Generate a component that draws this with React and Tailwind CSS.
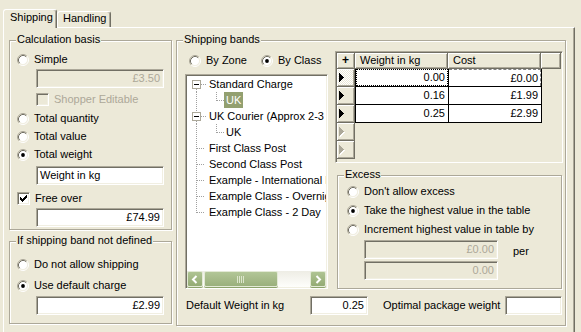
import React from "react";

const SUNKEN =
  "border border-t-[#ACA899] border-l-[#ACA899] border-b-white border-r-white shadow-[inset_1px_1px_0_#716F64,inset_-1px_-1px_0_#F1EFE2]";
const RAISED =
  "bg-[#ECE9D8] border-r border-b border-r-[#716F64] border-b-[#716F64] shadow-[inset_1px_1px_0_#fff,inset_-1px_-1px_0_#ACA899]";

function Radio({ checked }) {
  return (
    <svg width="12" height="12" viewBox="0 0 12 12" className="shrink-0">
      <circle cx="6" cy="6" r="4.5" fill="#fff" />
      <path d="M2.11 9.89A5.5 5.5 0 0 1 9.89 2.11" fill="none" stroke="#ACA899" />
      <path d="M9.89 2.11A5.5 5.5 0 0 1 2.11 9.89" fill="none" stroke="#fff" />
      <path d="M2.82 9.18A4.5 4.5 0 0 1 9.18 2.82" fill="none" stroke="#716F64" />
      <path d="M9.18 2.82A4.5 4.5 0 0 1 2.82 9.18" fill="none" stroke="#F1EFE2" />
      {checked && <circle cx="6" cy="6" r="1.9" fill="#000" />}
    </svg>
  );
}

function RadioRow({ checked, label, className = "" }) {
  return (
    <div className={`flex items-center h-[17px] ${className}`}>
      <Radio checked={checked} />
      <span className="ml-[5px] whitespace-nowrap">{label}</span>
    </div>
  );
}

function Check({ checked, disabled }) {
  return (
    <div
      className={`w-[13px] h-[13px] shrink-0 flex items-center justify-center ${SUNKEN} ${
        disabled ? "bg-[#ECE9D8]" : "bg-white"
      }`}
    >
      {checked && (
        <svg width="7" height="7" viewBox="0 0 7 7" shapeRendering="crispEdges">
          <path
            d="M6 0h1v1h-1z M5 1h2v1h-2z M0 2h1v1h-1z M4 2h3v1h-3z M0 3h2v1h-2z M3 3h3v1h-3z M0 4h5v1h-5z M1 5h3v1h-3z M2 6h1v1h-1z"
            fill="#000"
          />
        </svg>
      )}
    </div>
  );
}

function Input({ value, disabled, left, className = "" }) {
  return (
    <div
      className={`h-[19px] flex items-center px-[3px] whitespace-nowrap overflow-hidden ${SUNKEN} ${
        disabled ? "bg-[#ECE9D8] text-[#ACA899]" : "bg-white"
      } ${left ? "justify-start" : "justify-end"} ${className}`}
    >
      {value}
    </div>
  );
}

function Group({ label, className = "", children }) {
  return (
    <div
      className={`relative border border-[#ACA899] shadow-[inset_1px_1px_0_#fff,1px_1px_0_#fff] ${className}`}
    >
      <span className="absolute -top-[8px] left-[6px] px-px bg-[#ECE9D8] leading-[13px] whitespace-nowrap">
        {label}
      </span>
      {children}
    </div>
  );
}

const DOT = { stroke: "#A0A0A0", strokeDasharray: "1 1", fill: "none" };

function MinusBox() {
  return (
    <>
      <rect x="5.5" y="4.5" width="8" height="8" fill="#fff" stroke="#ACA899" />
      <rect x="7" y="8" width="5" height="1" fill="#000" />
    </>
  );
}

function TreeRow({ kind, label, selected }) {
  // kinds: first, parent, child, leaf, last
  if (kind === "child") {
    return (
      <div className="flex items-center h-[16px] whitespace-nowrap">
        <svg width="37" height="16" className="shrink-0">
          <line x1="9.5" y1="0" x2="9.5" y2="16" {...DOT} />
          <line x1="29.5" y1="0" x2="29.5" y2="9" {...DOT} />
          <line x1="30" y1="8.5" x2="37" y2="8.5" {...DOT} />
        </svg>
        <span
          className={`h-[16px] leading-[16px] px-[2px] ${
            selected ? "bg-[#93A070] text-white" : ""
          }`}
        >
          {label}
        </span>
      </div>
    );
  }
  return (
    <div className="flex items-center h-[16px] whitespace-nowrap">
      <svg width="21" height="16" className="shrink-0">
        {kind === "first" && <line x1="9.5" y1="13" x2="9.5" y2="16" {...DOT} />}
        {kind === "parent" && (
          <>
            <line x1="9.5" y1="0" x2="9.5" y2="4" {...DOT} />
            <line x1="9.5" y1="13" x2="9.5" y2="16" {...DOT} />
          </>
        )}
        {kind === "leaf" && <line x1="9.5" y1="0" x2="9.5" y2="16" {...DOT} />}
        {kind === "last" && <line x1="9.5" y1="0" x2="9.5" y2="9" {...DOT} />}
        {(kind === "first" || kind === "parent") && (
          <>
            <line x1="14" y1="8.5" x2="20" y2="8.5" {...DOT} />
            <MinusBox />
          </>
        )}
        {(kind === "leaf" || kind === "last") && (
          <line x1="10" y1="8.5" x2="18" y2="8.5" {...DOT} />
        )}
      </svg>
      <span className="ml-px">{label}</span>
    </div>
  );
}

function ScrollBtn({ dir }) {
  return (
    <div className="w-[16px] h-[16px] shrink-0 rounded-[2px] border border-[#E3EAD6] bg-gradient-to-b from-[#AFC493] to-[#94AB74] shadow-[0_1px_0_#8DA36C] flex items-center justify-center">
      <svg width="8" height="9" viewBox="0 0 8 9">
        {dir === "left" ? (
          <polyline points="5.5,1 2,4.5 5.5,8" fill="none" stroke="#fff" strokeWidth="2" />
        ) : (
          <polyline points="2.5,1 6,4.5 2.5,8" fill="none" stroke="#fff" strokeWidth="2" />
        )}
      </svg>
    </div>
  );
}

function Scrollbar() {
  return (
    <div className="h-[16px] shrink-0 flex bg-gradient-to-b from-[#EEEDE5] to-[#FEFEFB]">
      <ScrollBtn dir="left" />
      <div className="ml-px w-[74px] h-[16px] rounded-[2px] border border-[#E3EAD6] bg-gradient-to-b from-[#B2C697] to-[#9AB07C] shadow-[0_1px_0_#8DA36C] flex items-center justify-center">
        <svg width="8" height="7" viewBox="0 0 8 7" shapeRendering="crispEdges">
          <rect x="0" y="0" width="1" height="7" fill="#DDE6CD" />
          <rect x="2" y="0" width="1" height="7" fill="#DDE6CD" />
          <rect x="4" y="0" width="1" height="7" fill="#DDE6CD" />
          <rect x="6" y="0" width="1" height="7" fill="#DDE6CD" />
        </svg>
      </div>
      <div className="flex-1" />
      <ScrollBtn dir="right" />
    </div>
  );
}

function Tri({ disabled }) {
  return (
    <svg width="7" height="10" viewBox="0 0 7 10" shapeRendering="crispEdges">
      {disabled && <polygon points="1,1 6,5.5 1,10" fill="#fff" />}
      <polygon points="0,0 5,4.5 0,9" fill={disabled ? "#ACA899" : "#000"} />
    </svg>
  );
}

function Grid() {
  const rows = [
    ["0.00", "£0.00"],
    ["0.16", "£1.99"],
    ["0.25", "£2.99"],
    null,
    null,
  ];
  return (
    <div className={`h-[112px] pl-px pt-px flex flex-col border border-t-[#ACA899] border-l-[#ACA899] border-b-white border-r-white shadow-[inset_1px_1px_0_#716F64]`}>
      <div className="flex h-[16px] shrink-0">
        <div className={`w-[18px] ${RAISED} flex items-center justify-center font-bold text-[12px]`}>+</div>
        <div className={`w-[93px] ${RAISED} flex items-center pl-[5px]`}>Weight in kg</div>
        <div className={`w-[93px] ${RAISED} flex items-center pl-[5px]`}>Cost</div>
        <div className={`w-[20px] ${RAISED}`} />
      </div>
      {rows.map((r, i) => (
        <div key={i} className="flex h-[18px] shrink-0">
          <div
            className={`w-[18px] ${RAISED} flex items-center pl-[2px] ${
              i === 0
                ? "bg-[image:repeating-conic-gradient(#ffffff_0%_25%,#ECE9D8_0%_50%)] bg-[length:2px_2px]"
                : ""
            }`}
          >
            <Tri disabled={!r} />
          </div>
          {r && i === 0 && (
            <>
              <div className="w-[94px] bg-white border-l border-r border-b border-black flex">
                <div className="flex-1 border border-dotted border-black flex items-center justify-end pr-[2px]">
                  {r[0]}
                </div>
              </div>
              <div className="w-[93px] bg-white border-r border-b border-black flex">
                <div className="flex-1 border-t border-r border-dashed border-[#808080] flex items-center justify-end pr-[2px]">
                  {r[1]}
                </div>
              </div>
            </>
          )}
          {r && i > 0 && (
            <>
              <div className="w-[94px] bg-white border-l border-r border-b border-black flex items-center justify-end pr-[3px]">
                {r[0]}
              </div>
              <div className="w-[93px] bg-white border-r border-b border-black flex items-center justify-end pr-[3px]">
                {r[1]}
              </div>
            </>
          )}
        </div>
      ))}
    </div>
  );
}

export default function App() {
  return (
    <div className="w-[581px] h-[332px] overflow-hidden bg-[#ECE9D8] text-black text-[11px] leading-[13px] font-['Liberation_Sans',Arial,sans-serif]">
      {/* Tabs */}
      <div className="h-[27px] flex items-end pl-[3px]">
        <div className="relative z-10 -mb-px h-[19px] w-[54px] bg-[#ECE9D8] border-l border-t border-white border-r border-r-[#716F64] rounded-t-[3px] shadow-[inset_-1px_0_0_#ACA899] pl-[6px] pt-px">
          Shipping
        </div>
        <div className="h-[16px] w-[54px] bg-[#ECE9D8] border-l border-t border-white border-r border-r-[#716F64] rounded-t-[3px] shadow-[inset_-1px_0_0_#ACA899] pl-[5px]">
          Handling
        </div>
      </div>

      {/* Panel */}
      <div className="ml-[3px] w-[572px] h-[310px] border-t border-l border-white border-r border-r-[#716F64] shadow-[inset_-1px_0_0_#ACA899] flex items-start pl-[5px] pt-[12px]">
        {/* Left column */}
        <div className="w-[163px] flex flex-col shrink-0">
          <Group label="Calculation basis" className="h-[190px] flex flex-col pl-[7px] pt-[10px]">
            <RadioRow label="Simple" />
            <Input value="£3.50" disabled className="ml-[19px] w-[128px] mt-px" />
            <div className="ml-[19px] mt-[3px] h-[17px] flex items-center text-[#ACA899]">
              <Check disabled />
              <span className="ml-[5px]">Shopper Editable</span>
            </div>
            <RadioRow label="Total quantity" className="mt-[2px]" />
            <RadioRow label="Total value" className="mt-px" />
            <RadioRow label="Total weight" checked className="mt-px" />
            <Input value="Weight in kg" left className="ml-[19px] w-[128px] mt-[3px]" />
            <div className="mt-[5px] h-[17px] flex items-center">
              <Check checked />
              <span className="ml-[5px]">Free over</span>
            </div>
            <Input value="£74.99" className="ml-[19px] w-[128px] mt-px" />
          </Group>

          <Group label="If shipping band not defined" className="mt-[11px] h-[83px] flex flex-col pl-[7px] pt-[14px]">
            <RadioRow label="Do not allow shipping" />
            <RadioRow label="Use default charge" checked className="mt-[4px]" />
            <Input value="£2.99" className="ml-[19px] w-[128px] mt-[2px]" />
          </Group>
        </div>

        {/* Shipping bands */}
        <Group label="Shipping bands" className="ml-[4px] w-[390px] h-[286px] shrink-0 flex flex-col pl-[8px] pt-[10px]">
          <div className="flex items-start">
            {/* tree column */}
            <div className="w-[143px] shrink-0 flex flex-col">
              <div className="mt-px h-[17px] flex items-center pl-[4px]">
                <div className="w-[72px] flex items-center">
                  <Radio />
                  <span className="ml-[5px]">By Zone</span>
                </div>
                <div className="flex items-center">
                  <Radio checked />
                  <span className="ml-[5px]">By Class</span>
                </div>
              </div>
              <div className={`mt-[5px] h-[215px] bg-white p-px flex flex-col ${SUNKEN}`}>
                <div className="flex-1 overflow-hidden">
                  <TreeRow kind="first" label="Standard Charge" />
                  <TreeRow kind="child" label="UK" selected />
                  <TreeRow kind="parent" label="UK Courier (Approx 2-3 working days)" />
                  <TreeRow kind="child" label="UK" />
                  <TreeRow kind="leaf" label="First Class Post" />
                  <TreeRow kind="leaf" label="Second Class Post" />
                  <TreeRow kind="leaf" label="Example - International Delivery" />
                  <TreeRow kind="leaf" label="Example Class - Overnight" />
                  <TreeRow kind="last" label="Example Class - 2 Day" />
                </div>
                <Scrollbar />
              </div>
            </div>

            {/* grid column */}
            <div className="ml-[7px] w-[228px] shrink-0 flex flex-col">
              <Grid />
              <Group label="Excess" className="mt-[12px] ml-[2px] w-[225px] h-[114px] flex flex-col pl-[9px] pt-[6px]">
                <RadioRow label="Don't allow excess" className="h-[19px]" />
                <RadioRow label="Take the highest value in the table" checked className="h-[19px]" />
                <RadioRow label="Increment highest value in table by" className="h-[19px]" />
                <div className="ml-[17px] mt-px flex items-start">
                  <div className="flex flex-col">
                    <Input value="£0.00" disabled className="w-[134px]" />
                    <Input value="0.00" disabled className="w-[134px] mt-[2px]" />
                  </div>
                  <span className="ml-[15px] mt-[5px]">per</span>
                </div>
              </Group>
            </div>
          </div>

          <div className="mt-[7px] h-[19px] flex items-center">
            <span className="w-[125px] pl-px whitespace-nowrap">Default Weight in kg</span>
            <Input value="0.25" className="w-[58px]" />
            <span className="ml-[15px] w-[122px] whitespace-nowrap">Optimal package weight</span>
            <Input value="" className="w-[57px]" />
          </div>
        </Group>
      </div>
    </div>
  );
}
